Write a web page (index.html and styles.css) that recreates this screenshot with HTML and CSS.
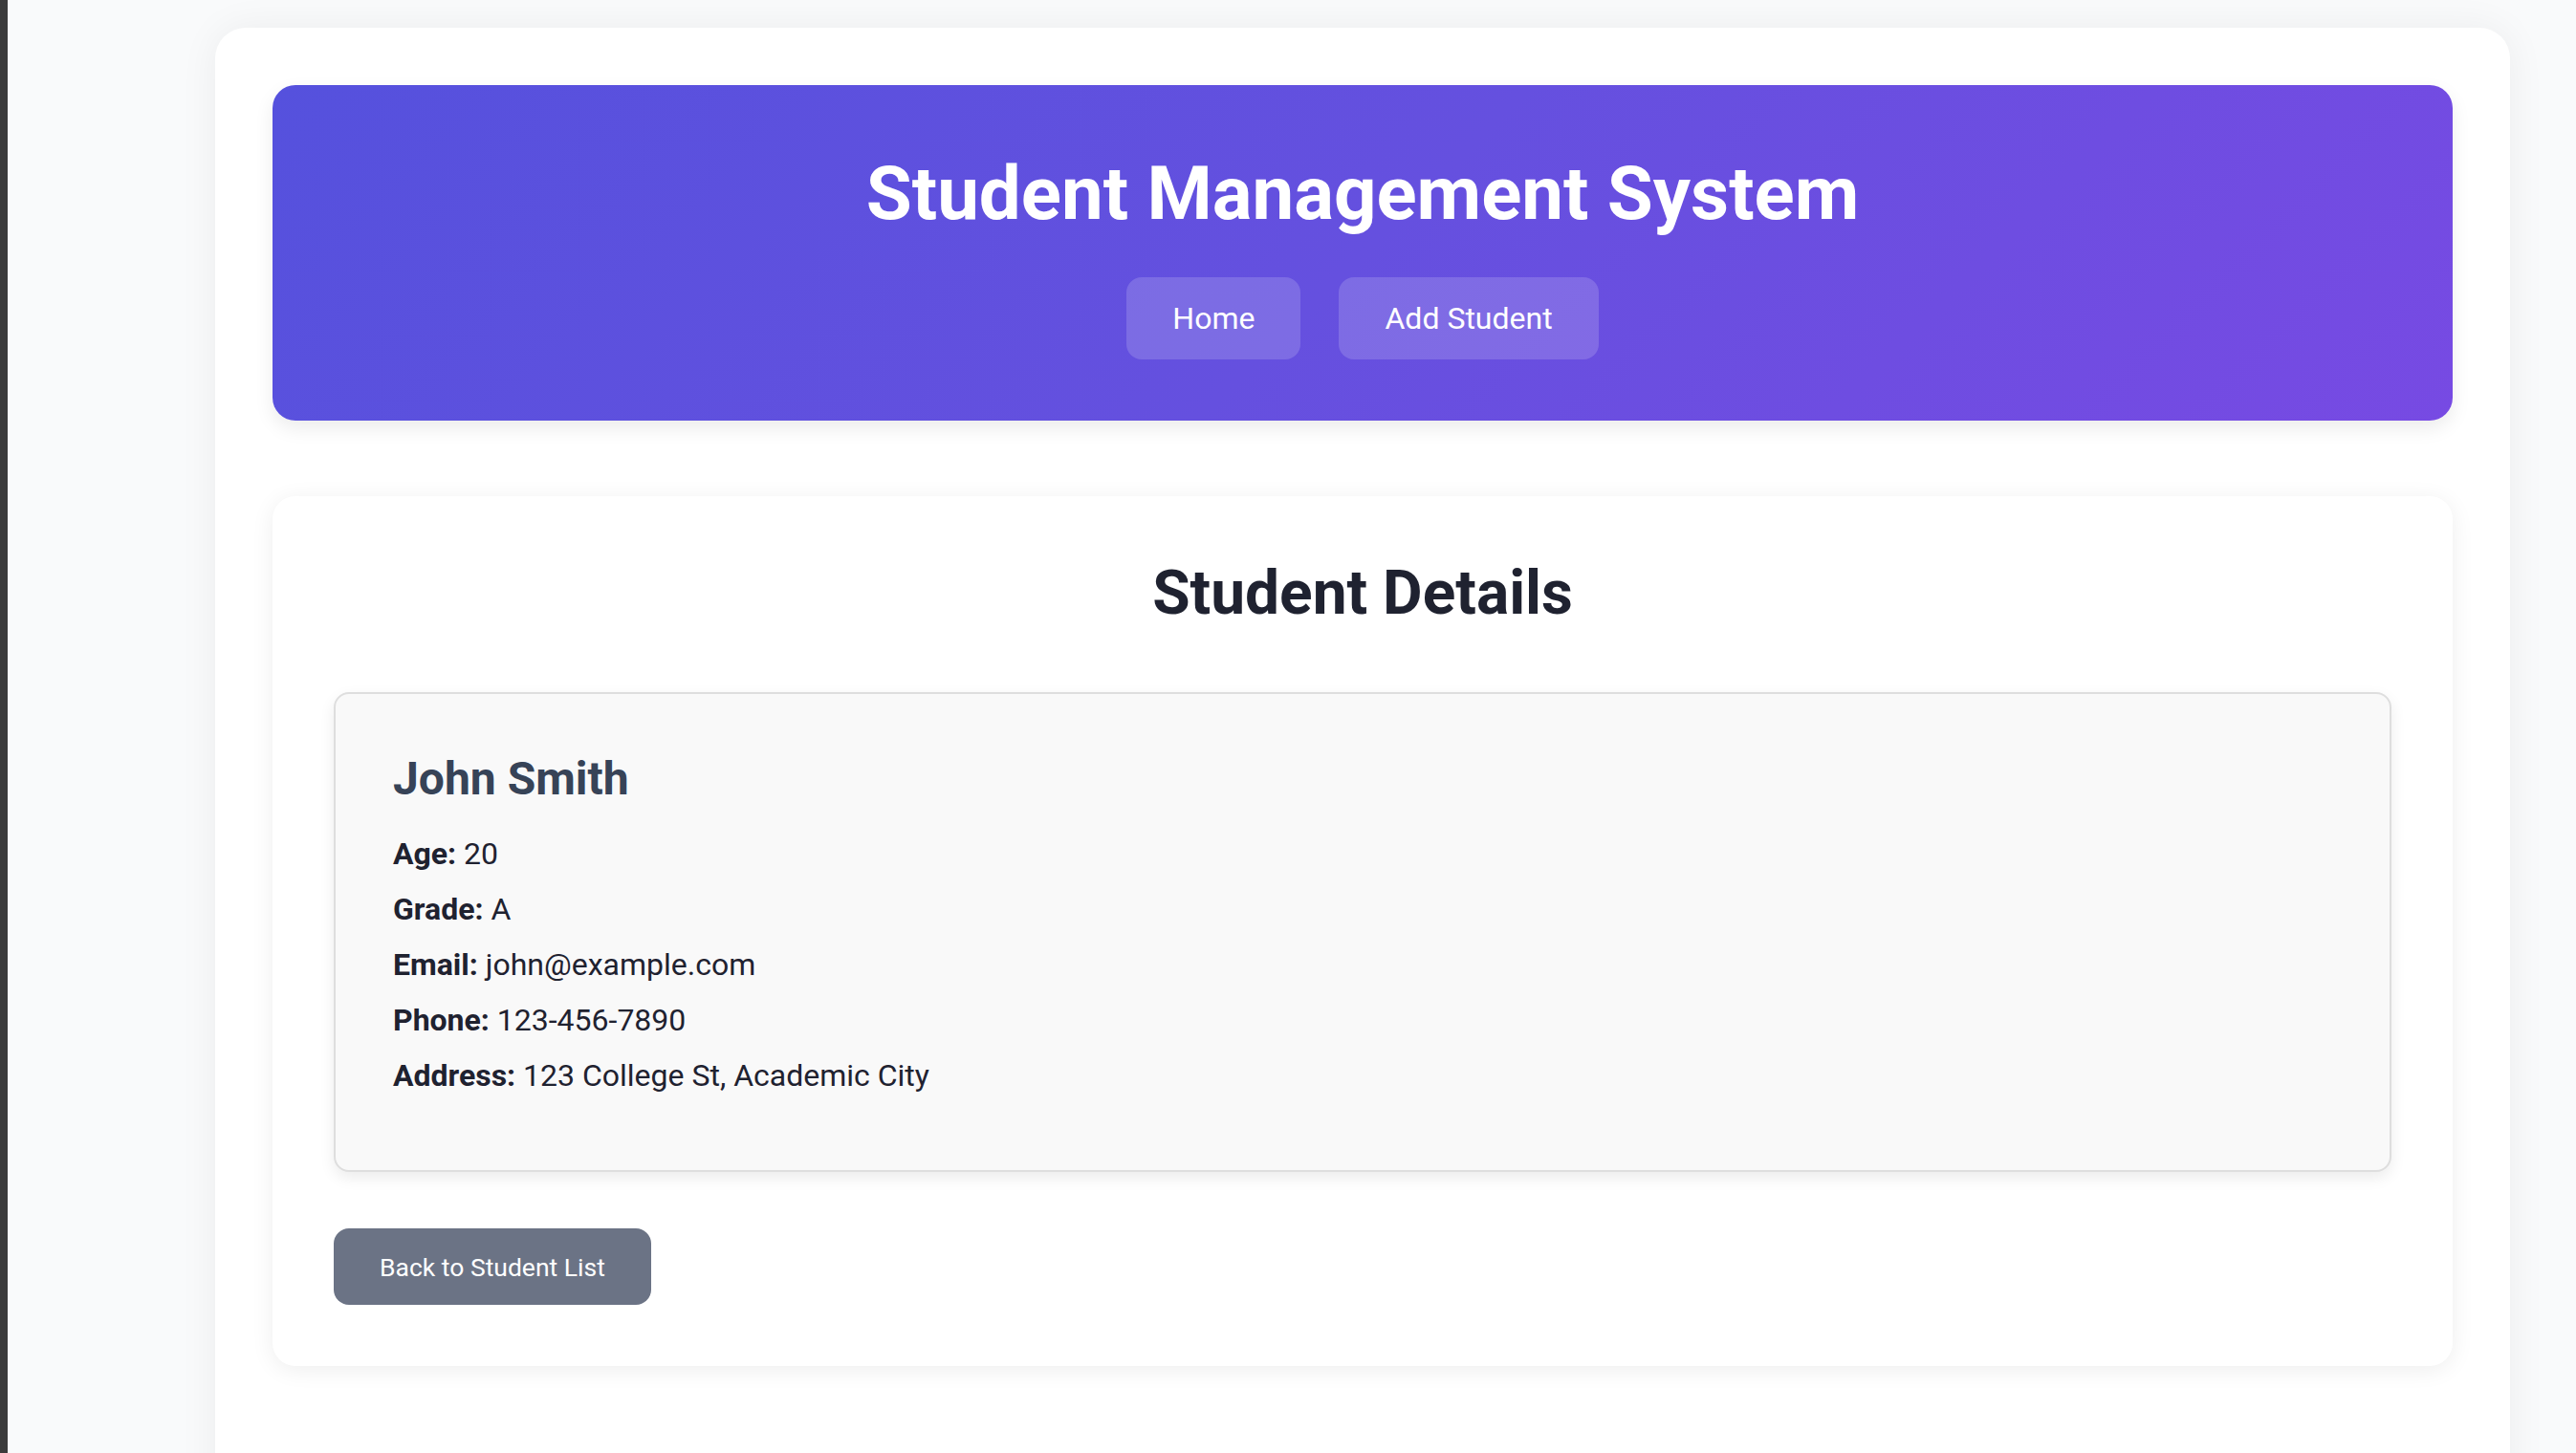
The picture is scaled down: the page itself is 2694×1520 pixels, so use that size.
FILE: index.html
```html
<!DOCTYPE html>
<html lang="en">
<head>
<meta charset="utf-8">
<title>Student Management System</title>
<link rel="stylesheet" href="styles.css">
</head>
<body>
  <div class="edge"></div>
  <div class="page">
    <div class="container">
      <header class="header">
        <h1 class="title">Student Management System</h1>
        <nav class="nav">
          <a class="nav-btn" href="#">Home</a>
          <a class="nav-btn" href="#">Add Student</a>
        </nav>
      </header>
      <main class="card">
        <h2 class="card-title">Student Details</h2>
        <section class="details">
          <h3 class="name">John Smith</h3>
          <p class="row"><strong>Age:</strong> 20</p>
          <p class="row"><strong>Grade:</strong> A</p>
          <p class="row"><strong>Email:</strong> john@example.com</p>
          <p class="row"><strong>Phone:</strong> 123-456-7890</p>
          <p class="row"><strong>Address:</strong> 123 College St, Academic City</p>
        </section>
        <a class="back-btn" href="#">Back to Student List</a>
      </main>
    </div>
  </div>
</body>
</html>
```
FILE: styles.css
```css
html, body {
  margin: 0;
  padding: 0;
  height: 100%;
}
body {
  display: flex;
  background: #f9fafb;
  font-family: Roboto, "Liberation Sans", Arial, sans-serif;
  color: #1f2937;
  overflow: hidden;
}
.edge {
  width: 8px;
  flex: none;
  background: #3b3b3b;
}
.page {
  flex: 1;
  padding: 29px 0 0 217px;
}
.container {
  width: 2400px;
  box-sizing: border-box;
  min-height: 1700px;
  padding: 60px;
  background: #ffffff;
  border-radius: 32px;
  box-shadow: 0 0 40px rgba(17, 24, 39, 0.06);
}
.header {
  background: linear-gradient(135deg, #5551dd 0%, #6550df 50%, #774ae3 100%);
  border-radius: 24px;
  padding: 68px 0 64px;
  text-align: center;
  box-shadow: 0 8px 20px rgba(0, 0, 0, 0.08);
}
.title {
  margin: 0 0 42px;
  font-size: 78px;
  font-weight: 700;
  line-height: normal;
  color: #ffffff;
}
.nav {
  display: flex;
  justify-content: center;
  gap: 40px;
}
.nav-btn {
  display: block;
  padding: 24px 48px;
  font-size: 32px;
  line-height: normal;
  color: #ffffff;
  text-decoration: none;
  background: rgba(255, 255, 255, 0.16);
  border-radius: 16px;
}
.card {
  display: block;
  margin-top: 79px;
  padding: 64px;
  background: #ffffff;
  border-radius: 24px;
  box-shadow: 0 4px 24px rgba(0, 0, 0, 0.07);
}
.card-title {
  margin: 0 0 66px;
  font-size: 64px;
  font-weight: 700;
  line-height: normal;
  text-align: center;
  color: #1f2230;
}
.details {
  padding: 60px 60px 65px;
  background: #f9f9f9;
  border: 2px solid #dedede;
  border-radius: 16px;
  box-shadow: 0 6px 16px rgba(0, 0, 0, 0.08);
}
.name {
  margin: 0 0 26px;
  font-size: 48px;
  font-weight: 700;
  line-height: normal;
  color: #374357;
}
.row {
  margin: 10px 0;
  font-size: 32px;
  line-height: 48px;
  color: #1f2230;
}
.row strong {
  font-weight: 700;
}
.back-btn {
  display: inline-block;
  margin-top: 59px;
  padding: 24.5px 48px;
  font-size: 26.5px;
  line-height: normal;
  color: #ffffff;
  text-decoration: none;
  background: #6b7385;
  border-radius: 16px;
}
```
